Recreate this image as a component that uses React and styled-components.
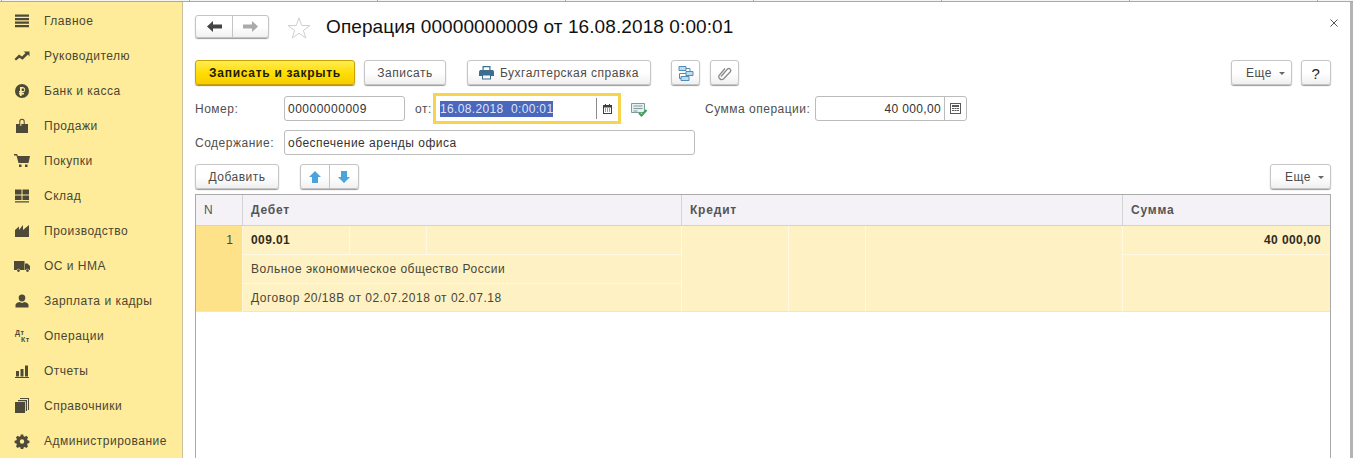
import styled, { createGlobalStyle } from 'styled-components';

const Global = createGlobalStyle`
    html, body {
        margin: 0;
        padding: 0;
        background: #fff;
    }
    body {
        font-family: "Liberation Sans", Arial, sans-serif;
        font-size: 12px;
        color: #4b4b4b;
    }
`;

const Page = styled.div`
    display: flex;
    flex-direction: column;
    width: 1353px;
    height: 458px;
    overflow: hidden;
`;

const TopStrip = styled.div`
    height: 1px;
    flex: none;
    border-bottom: 1px solid #a9a9a9;
    background-color: #f4f4f4;
    background-image: linear-gradient(to right, #a9a9a9 1px, transparent 1px);
    background-size: 188px 100%;
    background-position: 189px 0;
`;

const Body = styled.div`
    flex: 1;
    min-height: 0;
    display: flex;
    box-sizing: border-box;
    border-right: 3px solid #b4b4b4;
`;

const Sidebar = styled.nav`
    width: 183px;
    flex: none;
    box-sizing: border-box;
    padding-top: 1px;
    background: #feec9a;
    border-right: 1px solid #c8c09a;
`;

const NavItem = styled.div`
    display: flex;
    align-items: center;
    height: 35px;
    padding-left: 14px;
    gap: 14px;
    color: #4a4634;
    letter-spacing: 0.5px;
    white-space: nowrap;
`;

const NavIcon = styled.svg`
    width: 16px;
    height: 16px;
    flex: none;
    fill: #4d4a38;
`;

const Main = styled.main`
    flex: 1;
    min-width: 0;
    display: flex;
    flex-direction: column;
    padding: 13px 19px 0 12px;
`;

const TitleRow = styled.div`
    display: flex;
    align-items: center;
    height: 23px;
`;

const Title = styled.h1`
    margin: 1px 0 0 15px;
    font-size: 19px;
    font-weight: 400;
    color: #111;
    letter-spacing: 0.1px;
    white-space: nowrap;
`;

const Close = styled.svg`
    width: 8px;
    height: 8px;
    margin-left: auto;
    margin-right: -7px;
    margin-bottom: 7px;
    stroke: #555;
    stroke-width: 1;
`;

const Group = styled.div`
    display: flex;
    height: ${p => p.$h}px;
    margin-left: ${p => p.$left || 0}px;
    border: 1px solid #c4c4c4;
    border-radius: 3px;
    background: linear-gradient(#fff 50%, #f1f1f1);
    box-shadow: 0 1px 1px #9a9a9a;
`;

const GroupCell = styled.div`
    width: ${p => p.$w}px;
    display: flex;
    align-items: center;
    justify-content: center;
    & + & {
        border-left: 1px solid #c4c4c4;
    }
`;

const StarIcon = styled.svg`
    width: 24px;
    height: 22px;
    margin-left: 18px;
    margin-top: 2px;
    flex: none;
`;

const Toolbar = styled.div`
    display: flex;
    align-items: flex-start;
    margin-top: ${p => p.$top}px;
    height: 26px;
    flex: none;
`;

const Button = styled.div`
    width: ${p => p.$w}px;
    height: 25px;
    margin-left: ${p => p.$left || 0}px;
    padding-top: 1px;
    flex: none;
    display: flex;
    align-items: center;
    justify-content: center;
    gap: 6px;
    box-sizing: border-box;
    border: 1px solid #c6c6c6;
    border-radius: 3px;
    background: linear-gradient(#fff 50%, #f0f0f0);
    box-shadow: 0 1px 1px #9a9a9a;
    color: #4b4b4b;
    letter-spacing: 0.5px;
    white-space: nowrap;
`;

const PrimaryButton = styled(Button)`
    border-color: #c9a400;
    background: linear-gradient(#ffec55, #ffdd00 55%, #f6cd00);
    box-shadow: 0 1px 1px #8f8a60;
    color: #1c1c00;
    font-weight: 700;
    letter-spacing: 0.72px;
`;

const MoreButton = styled(Button)`
    justify-content: flex-end;
    padding-right: 6px;
    gap: 7px;
`;

const Caret = styled.span`
    width: 0;
    height: 0;
    border-left: 3px solid transparent;
    border-right: 3px solid transparent;
    border-top: 3px solid #666;
`;

const HelpMark = styled.span`
    font-size: 15px;
    color: #222;
`;

const Spacer = styled.div`
    margin-left: auto;
`;

const FieldRow = styled.div`
    display: flex;
    align-items: center;
    flex: none;
    height: ${p => p.$h}px;
    margin-top: ${p => p.$top}px;
`;

const Label = styled.label`
    width: ${p => p.$w}px;
    flex: none;
    margin-left: ${p => p.$left || 0}px;
    letter-spacing: 0.5px;
    color: #4f4f4f;
    white-space: nowrap;
`;

const Field = styled.div`
    width: ${p => p.$w}px;
    height: 25px;
    flex: none;
    display: flex;
    align-items: center;
    box-sizing: border-box;
    padding-left: 3px;
    padding-top: ${p => (p.$icon ? 0 : 1)}px;
    border: 1px solid #bcbcbc;
    border-radius: 3px;
    background: #fff;
    color: #333;
    letter-spacing: 0.5px;
    white-space: nowrap;
`;

const AmountValue = styled.span`
    flex: 1;
    text-align: right;
    padding-right: 3px;
    letter-spacing: 0.35px;
`;

const FieldButton = styled.span`
    width: 21px;
    height: 100%;
    flex: none;
    display: flex;
    align-items: center;
    justify-content: center;
    border-left: 1px solid #bcbcbc;
`;

const DateField = styled.div`
    width: 188px;
    height: 31px;
    flex: none;
    display: flex;
    align-items: center;
    box-sizing: border-box;
    padding-left: 4px;
    border: 3px solid #f6d44c;
    background: #fff;
`;

const Selected = styled.span`
    background: #4a66bd;
    color: #dfe4f4;
    line-height: 16px;
    letter-spacing: 0.35px;
    white-space: pre;
`;

const DateButton = styled.span`
    width: 21px;
    height: 21px;
    margin-left: auto;
    display: flex;
    align-items: center;
    justify-content: center;
    border-left: 1px solid #8c8c8c;
`;

const DocIcon = styled.svg`
    width: 17px;
    height: 14px;
    margin-left: 10px;
    margin-top: 2px;
    flex: none;
`;

const Table = styled.div`
    flex: 1;
    margin-top: 4px;
    border: 1px solid #aaa;
    border-bottom: none;
    display: grid;
    grid-template-columns: 47px 439px 441px 1fr;
    grid-template-rows: 31px 86px;
    align-content: start;
`;

const HeadCell = styled.div`
    display: flex;
    align-items: center;
    box-sizing: border-box;
    padding-left: 8px;
    background: #f4f2f7;
    border-right: ${p => (p.$last ? 'none' : '1px solid #d3d3d3')};
    border-bottom: 1px solid #d3d3d3;
    color: #555;
    font-weight: ${p => (p.$plain ? 400 : 700)};
    letter-spacing: 0.8px;
`;

const NumberCell = styled.div`
    box-sizing: border-box;
    padding: 7px 9px 0 0;
    text-align: right;
    background: #fde28a;
    border-right: 1px solid #fff6d8;
    border-bottom: 1px solid #e6e6e6;
    color: #4a4634;
`;

const BodyColumn = styled.div`
    display: grid;
    grid-template-rows: ${p => p.$rows};
    background: #fef1c4;
    border-right: ${p => (p.$last ? 'none' : '1px solid #fff8e2')};
    border-bottom: 1px solid #e6e6e6;
    min-width: 0;
`;

const SubRow = styled.div`
    display: flex;
    align-items: center;
    justify-content: ${p => (p.$end ? 'flex-end' : 'flex-start')};
    box-sizing: border-box;
    padding: 0 ${p => (p.$end ? 9 : 0)}px 0 ${p => (p.$text ? 8 : 0)}px;
    border-bottom: ${p => (p.$last ? 'none' : '1px solid #fff8e2')};
    color: #4a4634;
    letter-spacing: 0.5px;
    white-space: nowrap;
`;

const Strong = styled.span`
    font-weight: 700;
    color: #2f2c1c;
    letter-spacing: 0.4px;
`;

const SplitRow = styled.div`
    display: grid;
    grid-template-columns: 107px 77px 1fr;
    width: 100%;
    height: 100%;
`;

const SplitCell = styled.div`
    display: flex;
    align-items: center;
    padding-left: ${p => (p.$text ? 8 : 0)}px;
    border-right: ${p => (p.$last ? 'none' : '1px solid #fff8e2')};
`;

const ArrowIcon = styled.svg`
    transform: ${p => (p.$flip ? 'scaleX(-1)' : 'none')};
`;

const BlueIcon = styled.svg`
    transform: ${p => (p.$flip ? 'scaleY(-1)' : 'none')};
`;

const DtKt = styled.svg`
    width: 16px;
    height: 16px;
    flex: none;
`;

const icons = {
    home: <path d="M1 1.500h14v2.200H1zM1 5h14v2.200H1zM1 8.500h14v2.200H1zM1 12h14v2.200H1z" />,
    chart: <path d="M0.500 11l4.500-4.500 3 2 3.500-3.500-2-1.500h6v5l-1.500-2-5.500 5.300-3-2-3.500 2.700z" />,
    ruble: <path fillRule="evenodd" d="M8 1a7 7 0 1 1 0 14A7 7 0 0 1 8 1zM6 4v4H5v1.500h1V10H5v1.500h1V13h1.700v-1.500H10V10H7.700v-.5h1.300a2.800 2.800 0 0 0 0-5.500zM7.700 5.400H9a1.300 1.300 0 0 1 0 2.700H7.700z" />,
    bag: <path fillRule="evenodd" d="M2 6h3.300V3.500a2.700 2.700 0 0 1 5.400 0V6H14v9H2zM6.300 6v2h1V6zM9.700 6V3.500a1.700 1.700 0 0 0-3.400 0V6z" />,
    cart: <path d="M0 1h3l1 2h12l-1.500 7H4.500L2.500 2.500H0zM5 11.500h2.500V14H5zM11 11.500h2.500V14H11z" />,
    grid: <path d="M1 1.500h6.500v5H1zM8.500 1.500H15v5H8.500zM1 7.500h6.500v4.500H1zM8.500 7.500H15V12H8.500zM1 13.200h14v1.400H1z" />,
    factory: <path d="M1 14V7l4-3.500V7l4-5v5l6-5v12z" />,
    truck: <path fillRule="evenodd" d="M0 3h10.500v9H6.300a1.900 1.900 0 0 0-3.600 0H0zM11 5.500h2.500L16 8v4h-.7a1.900 1.900 0 0 0-3.600 0H11zM4.500 11.200a1.400 1.400 0 1 1 0 2.800 1.400 1.400 0 0 1 0-2.800zM13.500 11.200a1.400 1.400 0 1 1 0 2.800 1.400 1.400 0 0 1 0-2.800z" />,
    user: <path d="M8 1.500a3.300 3.300 0 0 1 3.300 3.500c0 1.700-1 3.500-3.300 3.500S4.700 6.700 4.700 5A3.300 3.300 0 0 1 8 1.500zM5.500 9l2.500 1 2.500-1c2.500.5 4 1.500 4 3v2.500h-13V12c0-1.500 1.500-2.500 4-3z" />,
    bars: <path d="M2 8h3v5.500H2zM6.500 6h3v7.500h-3zM11 2.500h3v11h-3zM1 14h14v1H1z" />,
    books: <path fillRule="evenodd" d="M1 4h10v11H1zM4 2h9v11h-1.200V3.200H4zM6 0h9v12h-1V1H6z" />,
    gear: <path fillRule="evenodd" d="M6.800 1.500h2.400l.4 1.800 1.200.5 1.600-1 1.700 1.700-1 1.600.5 1.200 1.800.4v2.400l-1.800.4-.5 1.200 1 1.600-1.700 1.700-1.600-1-1.200.5-.4 1.800H6.800l-.4-1.800-1.200-.5-1.600 1-1.700-1.700 1-1.600-.5-1.200-1.800-.4V7.700l1.800-.4.5-1.200-1-1.600 1.700-1.700 1.600 1 1.200-.5zM8 6.300a2.200 2.200 0 1 0 0 4.400 2.200 2.200 0 0 0 0-4.400z" />,
};

const menu = [
    ['Главное', 'home'],
    ['Руководителю', 'chart'],
    ['Банк и касса', 'ruble'],
    ['Продажи', 'bag'],
    ['Покупки', 'cart'],
    ['Склад', 'grid'],
    ['Производство', 'factory'],
    ['ОС и НМА', 'truck'],
    ['Зарплата и кадры', 'user'],
    ['Операции', null],
    ['Отчеты', 'bars'],
    ['Справочники', 'books'],
    ['Администрирование', 'gear'],
];

const Arrow = ({ color, flip }) => (
    <ArrowIcon $flip={flip} width="15" height="11" viewBox="0 0 15 11">
        <path d="M0 5.500L6 0v3.500h9v4H6V11z" fill={color} />
    </ArrowIcon>
);

const BlueArrow = ({ down }) => (
    <BlueIcon $flip={down} width="12" height="12" viewBox="0 0 12 12">
        <path d="M6 0l6 6H9v6H3V6H0z" fill="#4ba3dc" />
    </BlueIcon>
);

const Calendar = () => (
    <svg width="9" height="10" viewBox="0 0 9 10">
        <path fillRule="evenodd" fill="#3f3f3f" d="M0 1h2V0h1v1h3V0h1v1h2v9H0zM1 3.500V9h7V3.500zM2 4.500h1v1H2zM4 4.500h1v1H4zM6 4.500h1v1H6zM2 6.500h1v1H2zM4 6.500h1v1H4zM6 6.500h1v1H6z" />
    </svg>
);

const Calculator = () => (
    <svg width="11" height="11" viewBox="0 0 11 11">
        <path fillRule="evenodd" fill="#5a5a5a" d="M0 0h11v11H0zM1 1v9h9V1zM2 2h7v2H2zM2 5h2v1H2zM4.500 5h2v1h-2zM7 5h2v1H7zM2 7h2v1H2zM4.500 7h2v1h-2zM7 7h2v1H7z" />
    </svg>
);

const App = () => (
    <Page>
        <Global />
        <TopStrip />
        <Body>
            <Sidebar>
                {menu.map(([name, icon]) => (
                    <NavItem key={name}>
                        {icon ? (
                            <NavIcon viewBox="0 0 16 16">{icons[icon]}</NavIcon>
                        ) : (
                            <DtKt viewBox="0 0 16 16">
                                <text x="1" y="7" fontSize="7" fontWeight="700" fill="#4d4a38" fontFamily="Liberation Sans">Дт</text>
                                <text x="7" y="14" fontSize="7" fontWeight="700" fill="#4d4a38" fontFamily="Liberation Sans">Кт</text>
                            </DtKt>
                        )}
                        {name}
                    </NavItem>
                ))}
            </Sidebar>
            <Main>
                <TitleRow>
                    <Group $h={21}>
                        <GroupCell $w={36}><Arrow color="#444" /></GroupCell>
                        <GroupCell $w={35}><Arrow color="#aaa" flip /></GroupCell>
                    </Group>
                    <StarIcon viewBox="0 0 24 22">
                        <path d="M12 1l2.700 7.500h8.300l-6.700 5 2.500 7.500-6.800-4.700L5.200 21l2.500-7.500L1 8.500h8.300z" fill="#fff" stroke="#cfcfcf" />
                    </StarIcon>
                    <Title>Операция 00000000009 от 16.08.2018 0:00:01</Title>
                    <Close viewBox="0 0 8 8"><path d="M0.500 0.500l7 7M7.500 0.500l-7 7" /></Close>
                </TitleRow>
                <Toolbar $top={22}>
                    <PrimaryButton $w={160}>Записать и закрыть</PrimaryButton>
                    <Button $w={82} $left={9}>Записать</Button>
                    <Button $w={184} $left={21}>
                        <svg width="15" height="14" viewBox="0 0 15 14">
                            <path fillRule="evenodd" fill="#3c6f8f" d="M3.500 0h8v4h2.500l1 1.500V10h-3v3.500h-9V10H0V5.500L1 4h2.500zM4.700 1.200V4h5.600V1.200zM4 9.500v3h7v-3z" />
                        </svg>
                        Бухгалтерская справка
                    </Button>
                    <Button $w={29} $left={20}>
                        <svg width="16" height="15" viewBox="0 0 16 15">
                            <path d="M1 .5h7v4H1zM8 5.500h7v4H8zM3 10.500h8v4H3z" fill="#bcdcf0" stroke="#4f8db8" />
                            <path d="M8 2.500h4v3M8 7.500H1.500v5H3" fill="none" stroke="#4f8db8" />
                        </svg>
                    </Button>
                    <Button $w={29} $left={10}>
                        <svg width="14" height="15" viewBox="0 0 14 15">
                            <path d="M3 10.500l6.500-7.500a2 2 0 0 1 3 2.500L5.500 13a3 3 0 0 1-4.500-3.500L7 2.500" fill="none" stroke="#8a8a8a" strokeWidth="1.300" />
                        </svg>
                    </Button>
                    <Spacer />
                    <MoreButton $w={61}>Еще <Caret /></MoreButton>
                    <Button $w={30} $left={9}><HelpMark>?</HelpMark></Button>
                </Toolbar>
                <FieldRow $top={7} $h={31}>
                    <Label $w={89}>Номер:</Label>
                    <Field $w={121}>00000000009</Field>
                    <Label $w={18} $left={10}>от:</Label>
                    <DateField>
                        <Selected>16.08.2018  0:00:01</Selected>
                        <DateButton><Calendar /></DateButton>
                    </DateField>
                    <DocIcon viewBox="0 0 17 14">
                        <path d="M.5.500h13v9H.5z" fill="#e9f0f0" stroke="#7f9b9b" />
                        <path d="M2.500 3h9M2.500 5.500h9M2.500 8h4" stroke="#7f9b9b" />
                        <path d="M8 10l2.500 2.500L15.500 7" fill="none" stroke="#2fa84a" strokeWidth="2" />
                    </DocIcon>
                    <Label $w={110} $left={57}>Сумма операции:</Label>
                    <Field $w={152} $icon>
                        <AmountValue>40 000,00</AmountValue>
                        <FieldButton><Calculator /></FieldButton>
                    </Field>
                </FieldRow>
                <FieldRow $top={6} $h={25}>
                    <Label $w={89}>Содержание:</Label>
                    <Field $w={411}>обеспечение аренды офиса</Field>
                </FieldRow>
                <Toolbar $top={9}>
                    <Button $w={84}>Добавить</Button>
                    <Group $h={23} $left={21}>
                        <GroupCell $w={28}><BlueArrow /></GroupCell>
                        <GroupCell $w={28}><BlueArrow down /></GroupCell>
                    </Group>
                    <Spacer />
                    <MoreButton $w={61}>Еще <Caret /></MoreButton>
                </Toolbar>
                <Table>
                    <HeadCell $plain>N</HeadCell>
                    <HeadCell>Дебет</HeadCell>
                    <HeadCell>Кредит</HeadCell>
                    <HeadCell $last>Сумма</HeadCell>
                    <NumberCell>1</NumberCell>
                    <BodyColumn $rows="29px 29px 1fr">
                        <SubRow>
                            <SplitRow>
                                <SplitCell $text><Strong>009.01</Strong></SplitCell>
                                <SplitCell />
                                <SplitCell $last />
                            </SplitRow>
                        </SubRow>
                        <SubRow $text>Вольное экономическое общество России</SubRow>
                        <SubRow $text $last>Договор 20/18В от 02.07.2018 от 02.07.18</SubRow>
                    </BodyColumn>
                    <BodyColumn $rows="1fr">
                        <SplitRow>
                            <SplitCell />
                            <SplitCell />
                            <SplitCell $last />
                        </SplitRow>
                    </BodyColumn>
                    <BodyColumn $rows="29px 1fr" $last>
                        <SubRow $end><Strong>40 000,00</Strong></SubRow>
                        <SubRow $last />
                    </BodyColumn>
                </Table>
            </Main>
        </Body>
    </Page>
);

export default App;
